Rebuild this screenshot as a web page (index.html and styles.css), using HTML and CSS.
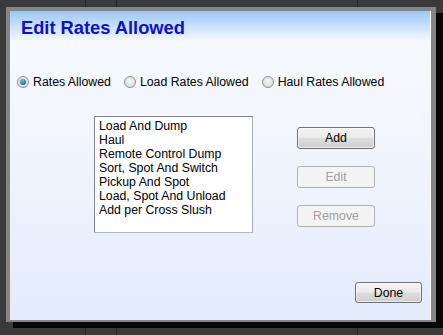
FILE: index.html
```html
<!DOCTYPE html>
<html>
<head>
<meta charset="utf-8">
<title>Edit Rates Allowed</title>
<link rel="stylesheet" href="styles.css">
</head>
<body>
    <div class="dialog">
        <div class="panel">
            <h1 class="title">Edit Rates Allowed</h1>

            <div class="options">
                <label class="opt"><input type="radio" name="kind" checked> Rates Allowed</label>
                <label class="opt"><input type="radio" name="kind"> Load Rates Allowed</label>
                <label class="opt"><input type="radio" name="kind"> Haul Rates Allowed</label>
            </div>

            <div class="main">
                <ul class="list">
                    <li>Load And Dump</li>
                    <li>Haul</li>
                    <li>Remote Control Dump</li>
                    <li>Sort, Spot And Switch</li>
                    <li>Pickup And Spot</li>
                    <li>Load, Spot And Unload</li>
                    <li>Add per Cross Slush</li>
                </ul>
                <div class="actions">
                    <button class="btn">Add</button>
                    <button class="btn" disabled>Edit</button>
                    <button class="btn" disabled>Remove</button>
                </div>
            </div>

            <div class="footer">
                <button class="btn done">Done</button>
            </div>
        </div>
    </div>
</body>
</html>
```

FILE: styles.css
```css
body {
    margin: 0;
    width: 443px;
    height: 335px;
    overflow: hidden;
    font-family: "Liberation Sans", Arial, sans-serif;
    background-color: #3a3a3a;
    background-image: linear-gradient(to right,
        transparent 85px, #262626 85px, #262626 86px, transparent 86px,
        transparent 116px, #262626 116px, #262626 117px, transparent 117px,
        transparent 357px, #262626 357px, #262626 358px, transparent 358px);
    padding-top: 7px;
    box-sizing: border-box;
}

.dialog {
    margin-left: 6px;
    width: 421px;
    border: 4px solid #858585;
    border-right-width: 5px;
    border-bottom-width: 2px;
    box-shadow: 7px 6px 0 #060606;
}

.panel {
    height: 309px;
    display: flex;
    flex-direction: column;
    border-right: 1px solid #ffffff;
    background: linear-gradient(to bottom, #f8faff 0%, #f3f6fe 40%, #e3ebfc 100%);
}

.title {
    margin: 0;
    height: 31px;
    box-sizing: border-box;
    padding: 6px 0 0 11px;
    font-size: 18.3px;
    line-height: 22px;
    font-weight: bold;
    color: #0b10cc;
    background: linear-gradient(to bottom, #9ac7f7 0%, #c6defb 45%, #f8faff 100%);
}

.options {
    display: flex;
    align-items: center;
    gap: 13px;
    margin-top: 32px;
    padding-left: 7px;
    height: 16px;
    font-size: 12.3px;
    color: #000000;
}

.opt {
    display: flex;
    align-items: center;
    gap: 4px;
}

.opt input {
    appearance: none;
    -webkit-appearance: none;
    margin: 0;
    width: 12px;
    height: 12px;
    border-radius: 50%;
    border: 1px solid #8c8f93;
    background: radial-gradient(circle at 50% 40%, #f7f7f7 0%, #e2e2e2 60%, #cfcfcf 100%);
    box-sizing: border-box;
    position: relative;
}

.opt input:checked::after {
    content: "";
    position: absolute;
    left: 2px;
    top: 2px;
    width: 6px;
    height: 6px;
    border-radius: 50%;
    background: radial-gradient(circle at 40% 35%, #6cc8ee 0%, #2a7db5 55%, #124a7a 100%);
}

.main {
    display: flex;
    margin-top: 26px;
    padding-left: 84px;
}

.list {
    margin: 0;
    padding: 2px 0 0 4px;
    list-style: none;
    width: 159px;
    height: 117px;
    box-sizing: border-box;
    border: 1px solid #7f848c;
    border-right-color: #a9adb3;
    border-bottom-color: #b4b8be;
    background: #ffffff;
    font-size: 12.3px;
    line-height: 14px;
    color: #000000;
}

.actions {
    display: flex;
    flex-direction: column;
    gap: 17px;
    margin-left: 44px;
    padding-top: 11px;
}

.btn {
    width: 78px;
    height: 22px;
    padding: 0;
    font-family: "Liberation Sans", Arial, sans-serif;
    font-size: 12.3px;
    color: #000000;
    border: 1px solid #707070;
    border-radius: 3px;
    background: linear-gradient(to bottom, #f3f3f3 0%, #ebebeb 48%, #dddddd 52%, #cfcfcf 100%);
    box-shadow: inset 0 0 0 1px rgba(255, 255, 255, 0.6);
}

.btn:disabled {
    color: #a0a0a0;
    border-color: #aeb2b5;
    background: #f4f4f4;
    box-shadow: none;
}

.footer {
    margin-top: auto;
    display: flex;
    justify-content: flex-end;
    padding: 0 8px 17px 0;
}

.done {
    width: 67px;
    height: 21px;
}
```
